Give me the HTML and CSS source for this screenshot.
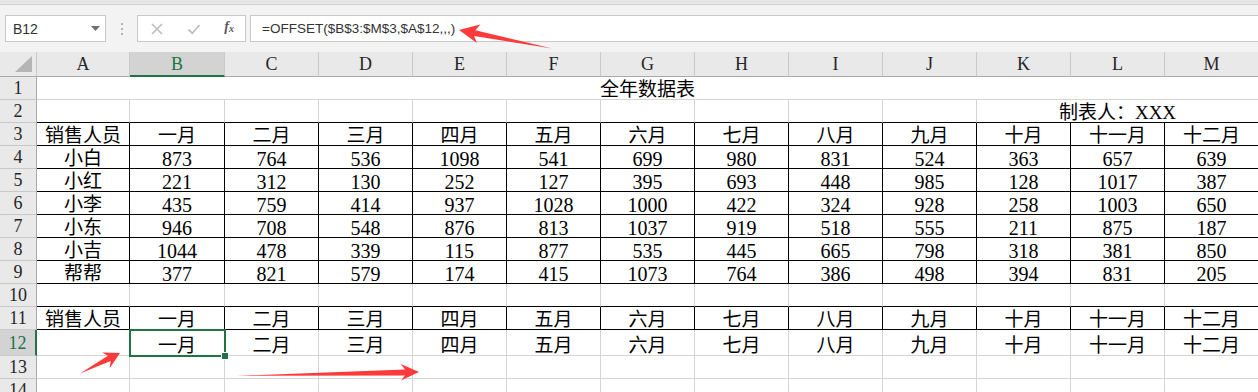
FILE: index.html
```html
<!DOCTYPE html>
<html>
<head>
    <title>全年数据表</title>
    <link rel="stylesheet" href="styles.css">
</head>
<body>
    <div class="topline"></div>
    <div class="fbar">
        <div class="namebox">
            <span>B12</span>
            <svg class="caret" width="9" height="5" viewBox="0 0 9 5"><path d="M0 0h9L4.5 5z" fill="#6f6f6f"/></svg>
        </div>
        <div class="grip"><i></i><i></i><i></i></div>
        <div class="fbtns">
            <svg width="14" height="14" viewBox="0 0 14 14"><path d="M2 2l10 10M12 2L2 12" stroke="#bdbdbd" stroke-width="1.6" fill="none"/></svg>
            <svg width="14" height="14" viewBox="0 0 14 14"><path d="M1.5 7.5l3.8 3.8L12.5 3" stroke="#bdbdbd" stroke-width="1.8" fill="none"/></svg>
            <span class="fx">f<sub>x</sub></span>
        </div>
        <div class="formula">=OFFSET($B$3:$M$3,$A$12,,,)</div>
    </div>

    <table class="sheet">
        <colgroup>
            <col class="w-rh">
            <col class="w-a">
            <col class="w-b">
            <col span="11" class="w-n">
        </colgroup>
        <tr class="hdr">
            <td class="corner"><svg width="17" height="16" viewBox="0 0 17 16"><path d="M17 0V16H0z" fill="#b5b5b5"/></svg></td>
            <td>A</td><td class="on">B</td><td>C</td><td>D</td><td>E</td><td>F</td><td>G</td><td>H</td><td>I</td><td>J</td><td>K</td><td>L</td><td>M</td>
        </tr>
        <tr>
            <td class="rh">1</td>
            <td colspan="13" class="cn">全年数据表</td>
        </tr>
        <tr class="edge">
            <td class="rh">2</td>
            <td></td><td></td><td></td><td></td><td></td><td></td><td></td><td></td><td></td><td></td>
            <td colspan="3" class="cn">制表人：XXX</td>
        </tr>
        <tr class="boxed cn">
            <td class="rh">3</td>
            <td>销售人员</td><td>一月</td><td>二月</td><td>三月</td><td>四月</td><td>五月</td><td>六月</td><td>七月</td><td>八月</td><td>九月</td><td>十月</td><td>十一月</td><td>十二月</td>
        </tr>
        <tr class="boxed">
            <td class="rh">4</td>
            <td class="cn">小白</td><td>873</td><td>764</td><td>536</td><td>1098</td><td>541</td><td>699</td><td>980</td><td>831</td><td>524</td><td>363</td><td>657</td><td>639</td>
        </tr>
        <tr class="boxed">
            <td class="rh">5</td>
            <td class="cn">小红</td><td>221</td><td>312</td><td>130</td><td>252</td><td>127</td><td>395</td><td>693</td><td>448</td><td>985</td><td>128</td><td>1017</td><td>387</td>
        </tr>
        <tr class="boxed">
            <td class="rh">6</td>
            <td class="cn">小李</td><td>435</td><td>759</td><td>414</td><td>937</td><td>1028</td><td>1000</td><td>422</td><td>324</td><td>928</td><td>258</td><td>1003</td><td>650</td>
        </tr>
        <tr class="boxed">
            <td class="rh">7</td>
            <td class="cn">小东</td><td>946</td><td>708</td><td>548</td><td>876</td><td>813</td><td>1037</td><td>919</td><td>518</td><td>555</td><td>211</td><td>875</td><td>187</td>
        </tr>
        <tr class="boxed">
            <td class="rh">8</td>
            <td class="cn">小吉</td><td>1044</td><td>478</td><td>339</td><td>115</td><td>877</td><td>535</td><td>445</td><td>665</td><td>798</td><td>318</td><td>381</td><td>850</td>
        </tr>
        <tr class="boxed">
            <td class="rh">9</td>
            <td class="cn">帮帮</td><td>377</td><td>821</td><td>579</td><td>174</td><td>415</td><td>1073</td><td>764</td><td>386</td><td>498</td><td>394</td><td>831</td><td>205</td>
        </tr>
        <tr class="edge">
            <td class="rh">10</td>
            <td></td><td></td><td></td><td></td><td></td><td></td><td></td><td></td><td></td><td></td><td></td><td></td><td></td>
        </tr>
        <tr class="boxed cn">
            <td class="rh">11</td>
            <td>销售人员</td><td>一月</td><td>二月</td><td>三月</td><td>四月</td><td>五月</td><td>六月</td><td>七月</td><td>八月</td><td>九月</td><td>十月</td><td>十一月</td><td>十二月</td>
        </tr>
        <tr class="tall cn">
            <td class="rh on">12</td>
            <td></td><td class="sel">一月</td><td>二月</td><td>三月</td><td>四月</td><td>五月</td><td>六月</td><td>七月</td><td>八月</td><td>九月</td><td>十月</td><td>十一月</td><td>十二月</td>
        </tr>
        <tr>
            <td class="rh">13</td>
            <td></td><td></td><td></td><td></td><td></td><td></td><td></td><td></td><td></td><td></td><td></td><td></td><td></td>
        </tr>
        <tr>
            <td class="rh">14</td>
            <td></td><td></td><td></td><td></td><td></td><td></td><td></td><td></td><td></td><td></td><td></td><td></td><td></td>
        </tr>
    </table>

    <!-- red annotation arrows drawn over the sheet -->
    <svg class="marks" width="1258" height="392" viewBox="0 0 1258 392">
        <polygon points="459,30 480.3,24.5 475.3,30.3 552,48.5 474.1,36 476.9,43" />
        <polygon points="120,353 109.8,368 110.6,361.1 80,373.5 107.9,355.7 102.1,352.5" />
        <polygon points="419,372 401,380.5 405,375.4 237,375.8 405,369.4 400.8,364" />
    </svg>
</body>
</html>
```

FILE: styles.css
```css
html,
body {
	margin: 0;
	width: 1258px;
	height: 392px;
	overflow: hidden;
	background: #fff;
}

body {
	position: relative;
	font-family: "Liberation Sans", "Noto Sans CJK SC", sans-serif;
}

.topline {
	height: 4px;
	background: #e6e6e6;
	border-bottom: 1px solid #d2d2d2;
}

/* formula bar */
.fbar {
	height: 47px;
	box-sizing: border-box;
	padding-top: 10px;
	display: flex;
	align-items: flex-start;
	background: #f3f3f3;
}

.namebox,
.fbtns,
.formula {
	height: 27px;
	box-sizing: border-box;
	border: 1px solid #c8c8c8;
	background: #fff;
	display: flex;
	align-items: center;
}

.namebox {
	width: 101px;
	margin-left: 5px;
	padding: 0 0 0 7px;
	font-size: 14px;
	color: #333;
	justify-content: space-between;
}

.namebox .caret {
	margin-right: 5px;
}

.grip {
	width: 31px;
	height: 27px;
	display: flex;
	flex-direction: column;
	align-items: center;
	justify-content: center;
	gap: 3px;
}

.grip i {
	width: 2px;
	height: 2px;
	background: #b3b3b3;
}

.fbtns {
	width: 109px;
	padding: 0 11px 0 12px;
	justify-content: space-between;
}

.fx {
	font-family: "Liberation Serif", serif;
	font-style: italic;
	font-weight: bold;
	font-size: 14px;
	color: #5a5a5a;
	margin-top: -3px;
}

.fx sub {
	font-size: 10px;
	vertical-align: -1px;
}

.formula {
	flex: 1;
	margin-left: 4px;
	margin-right: -10px;
	padding-left: 11px;
	font-size: 13.5px;
	color: #333;
}

/* sheet grid */
.sheet {
	border-collapse: separate;
	border-spacing: 0;
	table-layout: fixed;
	width: 1259px;
	font-family: "Liberation Serif", "Noto Sans CJK SC", serif;
	font-size: 20px;
	color: #000;
}

.w-rh { width: 37px; }
.w-a { width: 93px; }
.w-b { width: 95px; }
.w-n { width: 94px; }

.sheet td {
	box-sizing: border-box;
	height: 23px;
	padding: 0;
	border-right: 1px solid #d4d4d4;
	border-bottom: 1px solid #d4d4d4;
	text-align: center;
	vertical-align: bottom;
	line-height: 18px;
	white-space: nowrap;
}

.cn,
.sheet .cn {
	font-size: 19px;
}

.sheet .hdr td {
	height: 25px;
	background: #e9e9e9;
	border-right-color: #c9c9c9;
	border-bottom-color: #a9a9a9;
	vertical-align: middle;
	font-size: 18px;
	color: #262626;
}

.sheet .hdr td.on {
	background: #d3d3d3;
	color: #217346;
	border-bottom: 2px solid #217346;
}

.sheet .hdr .corner {
	text-align: right;
	vertical-align: bottom;
	line-height: 0;
	padding: 0 4px 4px 0;
}

.sheet td.rh {
	background: #e9e9e9;
	border-right-color: #a9a9a9;
	border-bottom-color: #c9c9c9;
	font-size: 18px;
	color: #262626;
	vertical-align: middle;
}

.sheet td.rh.on {
	background: #d3d3d3;
	color: #217346;
	border-right: 2px solid #217346;
}

.sheet .edge td:not(.rh) {
	border-bottom-color: #000;
}

.sheet .boxed td:not(.rh) {
	border-right-color: #000;
	border-bottom-color: #000;
}

.sheet .tall td {
	height: 26px;
}

/* active cell */
.sheet td.sel {
	position: relative;
}

.sheet td.sel::before {
	content: "";
	position: absolute;
	left: -1px;
	top: -1px;
	right: -2px;
	bottom: -2px;
	border: 2px solid #217346;
}

.sheet td.sel::after {
	content: "";
	position: absolute;
	right: -5px;
	bottom: -5px;
	width: 6px;
	height: 6px;
	background: #217346;
	border: 1px solid #fff;
}

.marks {
	position: absolute;
	left: 0;
	top: 0;
	pointer-events: none;
}

.marks polygon {
	fill: #fd3a3a;
}
```
